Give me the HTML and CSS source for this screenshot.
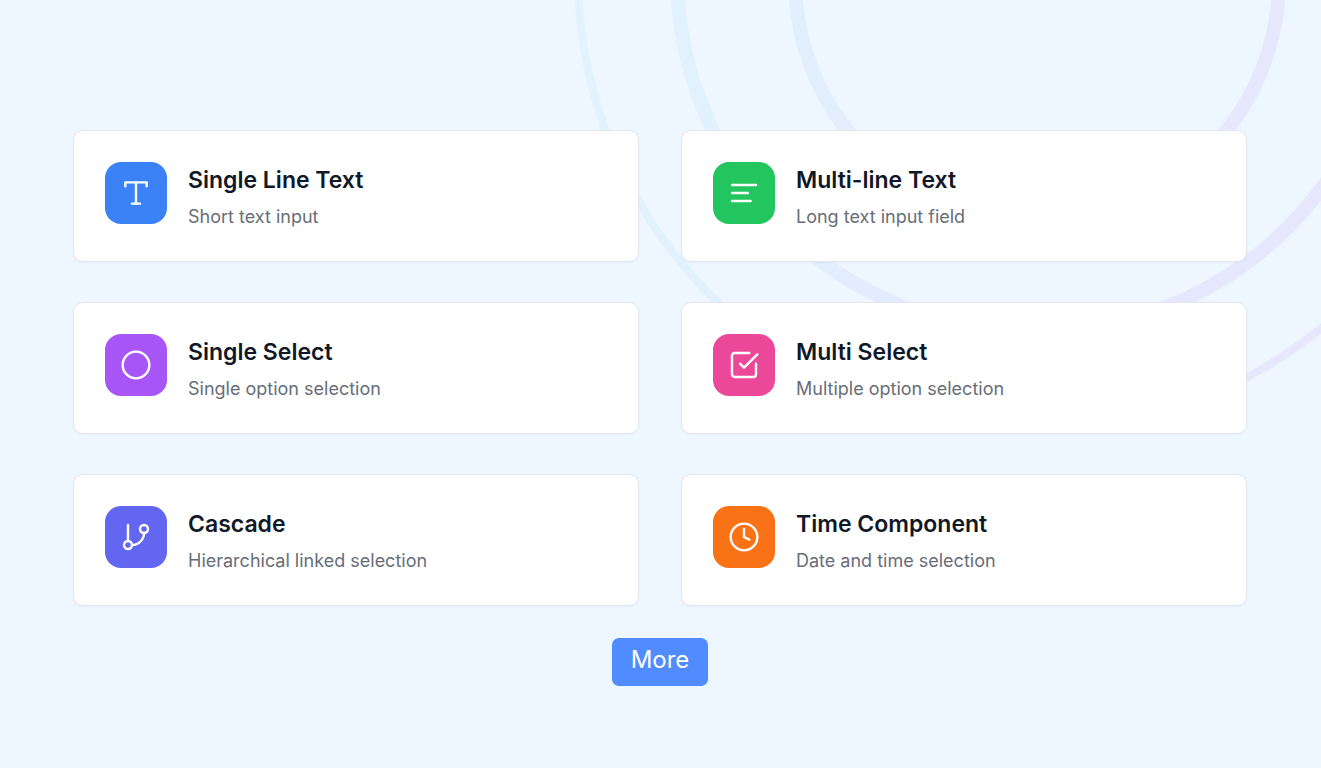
FILE: index.html
```html
<!DOCTYPE html>
<html lang="en">
<head>
  <meta charset="UTF-8" />
  <meta name="viewport" content="width=device-width, initial-scale=1.0"/>
  <title>Form Components</title>
  <link rel="stylesheet" href="styles.css">
</head>
<body>

  <svg class="rings" viewBox="0 0 760 450" fill="none" aria-hidden="true">
    <defs>
      <linearGradient id="ringColor" gradientUnits="userSpaceOnUse" x1="0" y1="0" x2="760" y2="0">
        <stop offset="0" stop-color="#e1f4fe"/>
        <stop offset="0.3" stop-color="#e2effe"/>
        <stop offset="0.5" stop-color="#e4eafe"/>
        <stop offset="1" stop-color="#e6e7fd"/>
      </linearGradient>
    </defs>
    <circle cx="476" cy="-20" r="242" stroke="url(#ringColor)" stroke-width="14"/>
    <circle cx="474" cy="-26" r="358" stroke="url(#ringColor)" stroke-width="14"/>
    <circle cx="473" cy="-26" r="456" stroke="url(#ringColor)" stroke-width="8"/>
  </svg>

  <main>
    <ul class="cards">
      <li class="card">
        <span class="icon blue">
          <svg viewBox="0 0 24 24"><path d="M4 7V4h16v3"/><path d="M9 20h6"/><path d="M12 4v16"/></svg>
        </span>
        <div>
          <h2>Single Line Text</h2>
          <p>Short text input</p>
        </div>
      </li>
      <li class="card">
        <span class="icon green">
          <svg viewBox="0 0 24 24"><path d="M3 6h18"/><path d="M3 12h12"/><path d="M3 18h14"/></svg>
        </span>
        <div>
          <h2>Multi-line Text</h2>
          <p>Long text input field</p>
        </div>
      </li>
      <li class="card">
        <span class="icon purple">
          <svg viewBox="0 0 24 24"><circle cx="12" cy="12" r="10"/></svg>
        </span>
        <div>
          <h2>Single Select</h2>
          <p>Single option selection</p>
        </div>
      </li>
      <li class="card">
        <span class="icon pink">
          <svg viewBox="0 0 24 24"><path d="M21 11v8a2 2 0 0 1-2 2H5a2 2 0 0 1-2-2V5a2 2 0 0 1 2-2h11"/><path d="m9 11 3 3L22 4"/></svg>
        </span>
        <div>
          <h2>Multi Select</h2>
          <p>Multiple option selection</p>
        </div>
      </li>
      <li class="card">
        <span class="icon indigo">
          <svg viewBox="0 0 24 24"><path d="M6 3v12"/><circle cx="18" cy="6" r="3"/><circle cx="6" cy="18" r="3"/><path d="M18 9a9 9 0 0 1-9 9"/></svg>
        </span>
        <div>
          <h2>Cascade</h2>
          <p>Hierarchical linked selection</p>
        </div>
      </li>
      <li class="card">
        <span class="icon orange">
          <svg viewBox="0 0 24 24"><circle cx="12" cy="12" r="10"/><path d="M12 6v6l4 2"/></svg>
        </span>
        <div>
          <h2>Time Component</h2>
          <p>Date and time selection</p>
        </div>
      </li>
    </ul>

    <button type="button" class="more">More</button>
  </main>

</body>
</html>
```
FILE: styles.css
```css
* {
  box-sizing: border-box;
}

body {
  position: relative;
  min-height: 100vh;
  margin: 0;
  overflow-x: hidden;
  background-color: #eef6ff;
  color: #111827;
  font-family: Inter, sans-serif;
}

/* background rings behind the cards */
.rings {
  position: absolute;
  top: 0;
  right: 0;
  width: 760px;
  height: 450px;
}

main {
  position: relative;
  display: flex;
  flex-direction: column;
  align-items: center;
  padding: 130px 74px 80px 73px;
}

.cards {
  display: grid;
  grid-template-columns: 1fr 1fr;
  gap: 40px 42px;
  width: 100%;
  margin: 0 0 32px;
  padding: 0;
  list-style: none;
}

.card {
  display: flex;
  align-items: flex-start;
  gap: 21px;
  min-height: 132px;
  padding: 31px;
  background: #ffffff;
  border: 1px solid #e2e7f1;
  border-radius: 10px;
  box-shadow: 0 1px 2px rgba(0, 0, 0, 0.04);
}

.icon {
  display: flex;
  align-items: center;
  justify-content: center;
  flex-shrink: 0;
  width: 62px;
  height: 62px;
  border-radius: 16px;
}

.icon svg {
  width: 32px;
  height: 32px;
  fill: none;
  stroke: #ffffff;
  stroke-width: 1.8;
  stroke-linecap: round;
  stroke-linejoin: round;
}

.blue { background: #3b82f6; }
.green { background: #22c55e; }
.purple { background: #a855f7; }
.pink { background: #ec4899; }
.indigo { background: #6366f1; }
.orange { background: #f97316; }

.card h2 {
  margin: 0 0 6px;
  font-size: 23px;
  font-weight: 600;
  line-height: 36px;
}

.card p {
  margin: 0;
  color: #676e79;
  font-size: 18px;
  line-height: 26px;
}

.more {
  min-width: 96px;
  height: 48px;
  padding: 0 18px 5px;
  background: #508cff;
  border: none;
  border-radius: 7px;
  color: #ffffff;
  font-family: inherit;
  font-size: 24px;
  cursor: pointer;
}
```
